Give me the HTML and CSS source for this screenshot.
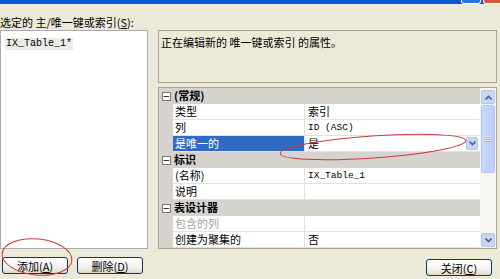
FILE: index.html
```html
<!DOCTYPE html>
<html lang="zh-CN">
  <head>
    <meta charset="UTF-8" />
    <title>索引/键</title>
    <link rel="stylesheet" href="styles.css">
  </head>
  <body>
    <div class="titlebar">
      <span class="tb-btn"></span>
      <span class="tb-close"></span>
    </div>

    <div class="top-label">选定的 主/唯一键或索引(<u>S</u>):</div>

    <div class="dialog">
      <div class="left-col">
        <div class="list-box">
          <span class="list-item">IX_Table_1*</span>
        </div>
        <div class="button-row">
          <button class="xp-btn">添加(<u>A</u>)</button>
          <button class="xp-btn">删除(<u>D</u>)</button>
        </div>
      </div>

      <div class="right-col">
        <div class="desc-box">正在编辑新的 唯一键或索引 的属性。</div>

        <div class="prop-grid">
          <div class="rows">
            <div class="row cat"><span class="gutter"><span class="toggle">−</span></span><span class="cat-name">(常规)</span></div>
            <div class="row"><span class="gutter"></span><span class="name">类型</span><span class="value">索引</span></div>
            <div class="row"><span class="gutter"></span><span class="name">列</span><span class="value mono">ID (ASC)</span></div>
            <div class="row"><span class="gutter"></span><span class="name selected">是唯一的</span><span class="value">是<span class="drop-btn"><svg width="7" height="5" viewBox="0 0 7 5"><path d="M0.5 0.5 L3.5 3.5 L6.5 0.5" fill="none" stroke="#4d6185" stroke-width="1.6"/></svg></span></span></div>
            <div class="row cat"><span class="gutter"><span class="toggle">−</span></span><span class="cat-name">标识</span></div>
            <div class="row"><span class="gutter"></span><span class="name">(名称)</span><span class="value mono">IX_Table_1</span></div>
            <div class="row"><span class="gutter"></span><span class="name">说明</span><span class="value"></span></div>
            <div class="row cat"><span class="gutter"><span class="toggle">−</span></span><span class="cat-name">表设计器</span></div>
            <div class="row"><span class="gutter"></span><span class="name disabled">包含的列</span><span class="value"></span></div>
            <div class="row"><span class="gutter"></span><span class="name">创建为聚集的</span><span class="value">否</span></div>
          </div>
          <div class="scrollbar">
            <span class="sb-arrow"><svg width="7" height="5" viewBox="0 0 7 5"><path d="M0.5 4.5 L3.5 1.5 L6.5 4.5" fill="none" stroke="#4d6185" stroke-width="1.6"/></svg></span>
            <span class="sb-thumb"><span class="grip"></span></span>
            <span class="sb-track"></span>
            <span class="sb-arrow"><svg width="7" height="5" viewBox="0 0 7 5"><path d="M0.5 0.5 L3.5 3.5 L6.5 0.5" fill="none" stroke="#4d6185" stroke-width="1.6"/></svg></span>
          </div>
        </div>

        <div class="close-row">
          <button class="xp-btn close-btn">关闭(<u>C</u>)</button>
        </div>
      </div>
    </div>

    <!-- red hand-drawn marks over the dialog -->
    <svg class="marks" width="500" height="279" viewBox="0 0 500 279">
      <ellipse cx="37" cy="257" rx="35" ry="18" transform="rotate(6 37 257)" fill="none" stroke="#cc3a3a" stroke-width="1"/>
      <ellipse cx="373" cy="147" rx="93" ry="11" transform="rotate(-4 373 147)" fill="none" stroke="#cc3a3a" stroke-width="1"/>
    </svg>
  </body>
</html>
```

FILE: styles.css
```css
* {
  margin: 0;
  padding: 0;
  box-sizing: border-box;
}

body {
  width: 500px;
  height: 279px;
  overflow: hidden;
  position: relative;
  background: #ece9d8;
  font-family: "Noto Sans CJK SC", "DejaVu Sans", sans-serif;
  font-size: 11px;
  color: #000;
}

.titlebar {
  height: 4px;
  background: #0a5ad6;
  display: flex;
  justify-content: flex-end;
}

.tb-btn {
  width: 20px;
  border: 1px solid #fff;
  border-top: none;
  border-radius: 0 0 3px 3px;
  background: #2b71e8;
  margin-right: 2px;
}

.tb-close {
  width: 17px;
  border: 1px solid #fff;
  border-top: none;
  border-right: none;
  border-radius: 0 0 0 3px;
  background: #d8553a;
}

.top-label {
  height: 26px;
  padding-top: 10px;
  line-height: 16px;
}

.dialog {
  display: flex;
  gap: 10px;
}

.left-col {
  width: 148px;
}

.list-box {
  height: 219px;
  background: #fff;
  border: 1px solid #a5acb5;
  padding: 2px 0 0 4px;
}

.list-item {
  display: inline-block;
  background: #ecebe6;
  font-family: "Liberation Mono", monospace;
  font-size: 10px;
  line-height: 12px;
  padding: 0 1px;
}

.button-row {
  display: flex;
  gap: 9px;
  margin-top: 8px;
  padding-left: 2px;
}

.xp-btn {
  width: 66px;
  height: 17px;
  border: 1px solid #003c74;
  border-radius: 3px;
  background: linear-gradient(#ffffff, #f3f2ed 60%, #dcd9cd);
  font-family: inherit;
  font-size: 11px;
  line-height: 14px;
  color: #000;
}

.right-col {
  width: 339px;
}

.desc-box {
  height: 53px;
  border: 1px solid #a7a697;
  padding: 4px 0 0 2px;
  line-height: 14px;
}

.prop-grid {
  margin-top: 4px;
  height: 162px;
  border: 1px solid #a7a697;
  background: #fff;
  display: flex;
}

.rows {
  flex: 1;
}

.row {
  height: 16px;
  display: flex;
  line-height: 15px;
}

.gutter {
  width: 14px;
  background: #d6d3ce;
  display: flex;
  justify-content: center;
  align-items: center;
}

.toggle {
  width: 9px;
  height: 9px;
  border: 1px solid #7a7a7a;
  background: #fff;
  font-size: 9px;
  line-height: 6px;
  text-align: center;
  font-family: "DejaVu Sans", sans-serif;
}

.row.cat {
  background: #d6d3ce;
}

.cat-name {
  font-weight: bold;
  padding-left: 1px;
}

.name {
  width: 131px;
  padding-left: 2px;
  border-bottom: 1px solid #e3e1da;
}

.name.selected {
  background: #316ac5;
  color: #fff;
}

.name.disabled {
  color: #a3a3a3;
}

.value {
  flex: 1;
  padding-left: 3px;
  border-left: 1px solid #e3e1da;
  border-bottom: 1px solid #e3e1da;
  display: flex;
  justify-content: space-between;
  align-items: center;
}

.value.mono {
  font-family: "Liberation Mono", monospace;
  font-size: 9.5px;
}

.drop-btn {
  width: 12px;
  height: 13px;
  margin-right: 2px;
  background: #c6d6f8;
  border: 1px solid #b3c6ef;
  border-radius: 2px;
  display: flex;
  justify-content: center;
  align-items: center;
}

.scrollbar {
  width: 16px;
  background: #f7f6f2;
  display: flex;
  flex-direction: column;
  padding: 2px 1px 1px;
  gap: 1px;
}

.sb-arrow {
  height: 14px;
  background: #c6d6f8;
  border: 1px solid #b3c6ef;
  border-radius: 2px;
  display: flex;
  justify-content: center;
  align-items: center;
}

.sb-thumb {
  height: 68px;
  background: linear-gradient(90deg, #c9d8fb, #bccff8);
  border: 1px solid #b1c4ee;
  border-radius: 2px;
  display: flex;
  justify-content: center;
  align-items: center;
}

.grip {
  width: 6px;
  height: 6px;
  background: repeating-linear-gradient(#eef3fe 0 1px, #8ea8e0 1px 2px);
}

.sb-track {
  flex: 1;
}

.close-row {
  display: flex;
  justify-content: flex-end;
  margin-top: 10px;
  padding-right: 5px;
}

.close-btn {
  height: 17px;
}

.marks {
  position: absolute;
  left: 0;
  top: 0;
  pointer-events: none;
}
```
